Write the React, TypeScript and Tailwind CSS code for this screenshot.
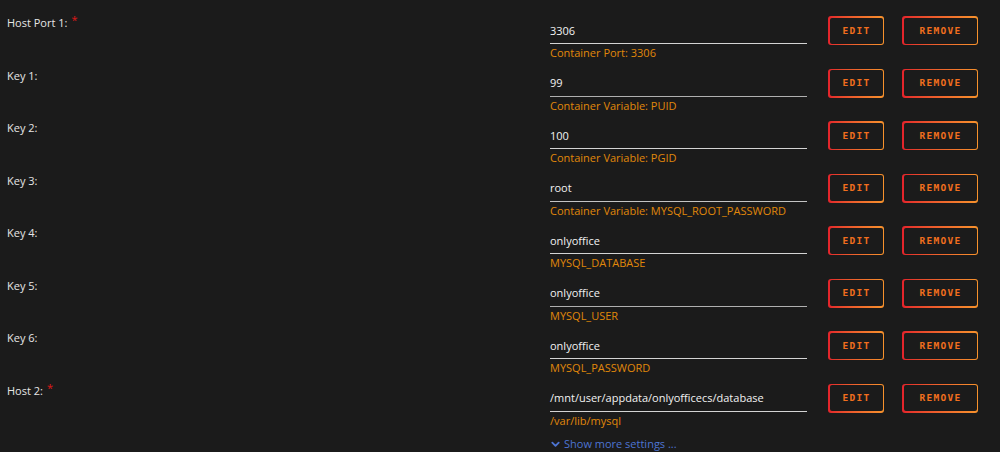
import React from "react";

type Row = { label: string; required?: boolean; value: string; help: string; line: string };

const rows: Row[] = [
  { label: "Host Port 1:", required: true, value: "3306", help: "Container Port: 3306", line: "bg-[#d4d4d4]" },
  { label: "Key 1:", value: "99", help: "Container Variable: PUID", line: "bg-[#b0b0b0]" },
  { label: "Key 2:", value: "100", help: "Container Variable: PGID", line: "bg-[#d4d4d4]" },
  { label: "Key 3:", value: "root", help: "Container Variable: MYSQL_ROOT_PASSWORD", line: "bg-[#c4c4c4]" },
  { label: "Key 4:", value: "onlyoffice", help: "MYSQL_DATABASE", line: "bg-[#d4d4d4]" },
  { label: "Key 5:", value: "onlyoffice", help: "MYSQL_USER", line: "bg-[#b0b0b0]" },
  { label: "Key 6:", value: "onlyoffice", help: "MYSQL_PASSWORD", line: "bg-[#d4d4d4]" },
  { label: "Host 2:", required: true, value: "/mnt/user/appdata/onlyofficecs/database", help: "/var/lib/mysql", line: "bg-[#d4d4d4]" },
];

function GradButton({ text, width }: { text: string; width: string }) {
  return (
    <div className={`${width} h-[29px] rounded-[3px] p-[1.5px] bg-gradient-to-r from-[#e3222b] to-[#f7922c]`}>
      <div className="w-full h-full rounded-[2px] bg-[#1b1b1b] flex items-center justify-center">
        <span
          className="text-[9.5px] font-bold tracking-[1.3px] text-[#f26f1e] leading-none pl-[1px]"
          style={{ fontFamily: '"DejaVu Sans Mono", "Liberation Mono", monospace' }}
        >
          {text}
        </span>
      </div>
    </div>
  );
}

export default function App() {
  return (
    <div
      className="w-[1000px] h-[452px] bg-[#1b1b1b] overflow-hidden pt-[14px]"
      style={{ fontFamily: '"Open Sans", "Noto Sans", sans-serif' }}
    >
      {rows.map((r, i) => (
        <div key={i} className="flex h-[52.5px]">
          <div className="w-[550px] pl-[7px] text-[11px] leading-[18px] text-[#e6e6e6]">
            {r.label}
            {r.required && <span className="text-[#e01818] ml-[4px] relative top-[-3px]">*</span>}
          </div>
          <div className="w-[257px] flex flex-col">
            <div className="mt-[7.5px] h-[18px] text-[11px] leading-[18px] text-[#f2f2f2]">{r.value}</div>
            <div className={`mt-[3.5px] h-[1px] ${r.line}`} />
            <div className="h-[18px] text-[11px] leading-[18px] text-[#e0880a]">{r.help}</div>
          </div>
          <div className="ml-[21px] mt-[2px] flex gap-[18px]">
            <GradButton text="EDIT" width="w-[56px]" />
            <GradButton text="REMOVE" width="w-[76px]" />
          </div>
        </div>
      ))}
      <div className="pl-[550px] flex items-center gap-[3px] text-[11px] leading-[16px] text-[#4d74d2] mt-[2px]">
        <svg width="11" height="11" viewBox="0 0 24 24" fill="none" stroke="#4d74d2" strokeWidth="4" strokeLinecap="round" strokeLinejoin="round">
          <path d="M5 8l7 7 7-7" />
        </svg>
        <span>Show more settings ...</span>
      </div>
    </div>
  );
}
